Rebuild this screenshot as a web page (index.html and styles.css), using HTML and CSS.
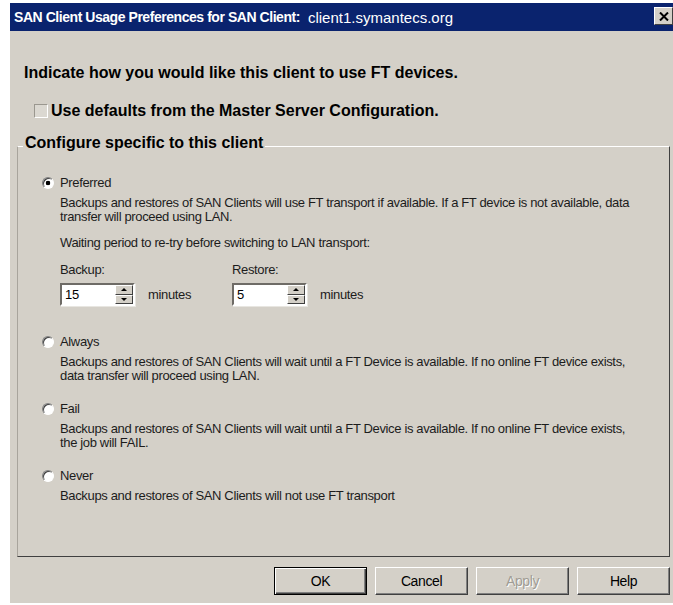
FILE: index.html
```html
<!DOCTYPE html>
<html lang="en">
<head>
<meta charset="utf-8">
<title>SAN Client Usage Preferences</title>
<link rel="stylesheet" href="styles.css">
</head>
<body>
<div class="dialog">
  <div class="titlebar">
    <span class="title-main">SAN Client Usage Preferences for SAN Client:</span><span class="title-host">client1.symantecs.org</span>
    <span class="close-btn">
      <svg width="10" height="9" viewBox="0 0 10 9"><path d="M1 0.5 L9 8.5 M9 0.5 L1 8.5" stroke="#000" stroke-width="2" fill="none"/></svg>
    </span>
  </div>

  <div class="content">
    <p class="intro">Indicate how you would like this client to use FT devices.</p>

    <label class="defaults"><span class="checkbox"></span>Use defaults from the Master Server Configuration.</label>

    <fieldset class="group">
      <legend>Configure specific to this client</legend>
      <div class="group-body">

        <div class="option preferred">
          <div class="radio-row"><span class="radio checked"></span>Preferred</div>
          <p class="desc">Backups and restores of SAN Clients will use FT transport if available. If a FT device is not available, data<br>transfer will proceed using LAN.</p>
          <p class="wait">Waiting period to re-try before switching to LAN transport:</p>
          <div class="spins">
            <div class="spin-field">
              <div class="spin-label">Backup:</div>
              <div class="spin-row">
                <div class="spinbox">
                  <span class="spin-value">15</span>
                  <span class="spin-buttons"><span class="spin-btn"><span class="tri-up"></span></span><span class="spin-btn"><span class="tri-down"></span></span></span>
                </div>
                <span class="unit">minutes</span>
              </div>
            </div>
            <div class="spin-field">
              <div class="spin-label">Restore:</div>
              <div class="spin-row">
                <div class="spinbox">
                  <span class="spin-value">5</span>
                  <span class="spin-buttons"><span class="spin-btn"><span class="tri-up"></span></span><span class="spin-btn"><span class="tri-down"></span></span></span>
                </div>
                <span class="unit">minutes</span>
              </div>
            </div>
          </div>
        </div>

        <div class="option">
          <div class="radio-row"><span class="radio"></span>Always</div>
          <p class="desc">Backups and restores of SAN Clients will wait until a FT Device is available. If no online FT device exists,<br>data transfer will proceed using LAN.</p>
        </div>

        <div class="option">
          <div class="radio-row"><span class="radio"></span>Fail</div>
          <p class="desc">Backups and restores of SAN Clients will wait until a FT Device is available. If no online FT device exists,<br>the job will FAIL.</p>
        </div>

        <div class="option">
          <div class="radio-row"><span class="radio"></span>Never</div>
          <p class="desc">Backups and restores of SAN Clients will not use FT transport</p>
        </div>

      </div>
    </fieldset>

    <div class="buttons">
      <button class="btn default">OK</button>
      <button class="btn">Cancel</button>
      <button class="btn" disabled>Apply</button>
      <button class="btn">Help</button>
    </div>
  </div>
</div>
</body>
</html>
```

FILE: styles.css
```css
* {
  box-sizing: border-box;
}

html,
body {
  margin: 0;
  padding: 0;
  background: #fff;
}

body {
  font-family: "Liberation Sans", Arial, sans-serif;
  font-size: 13px;
  letter-spacing: -0.35px;
  color: #1c1c1c;
  overflow: hidden;
}

p {
  margin: 0;
}

/* window frame */
.dialog {
  margin: 3px 0 0 10px;
  width: 663px;
  height: 600px;
  background: #d4d0c8;
  display: flex;
  flex-direction: column;
}

.titlebar {
  height: 28px;
  background: #0a236e;
  color: #fff;
  display: flex;
  align-items: center;
  padding-left: 4px;
  white-space: nowrap;
  letter-spacing: 0;
}

.title-main {
  font-weight: bold;
  font-size: 14px;
  letter-spacing: -0.45px;
}

.title-host {
  font-size: 15px;
  margin-left: 8px;
}

.close-btn {
  margin-left: auto;
  align-self: flex-start;
  margin-top: 4px;
  width: 19px;
  height: 18px;
  background: #d4d0c8;
  border: 1px solid;
  border-color: #fff #404040 #404040 #fff;
  display: flex;
  align-items: center;
  justify-content: center;
}

/* dialog body */
.content {
  flex: 1;
  display: flex;
  flex-direction: column;
  padding: 0 3px 0 7px;
}

.intro,
.defaults,
.group legend {
  font-weight: bold;
  font-size: 16px;
  line-height: 18px;
  letter-spacing: 0;
  color: #000;
}

.intro {
  margin: 33px 0 0 7px;
}

.defaults {
  margin-top: 20px;
  padding-left: 17px;
  display: flex;
  align-items: center;
}

.checkbox {
  width: 14px;
  height: 14px;
  margin-right: 3px;
  background: #dbd8d1;
  border: 1px solid;
  border-color: #9a978f #fff #fff #9a978f;
}

/* group box */
.group {
  margin: 14px 0 0;
  padding: 0;
  min-width: 0;
  border: 1px solid;
  border-color: #fff #404040 #404040 #a8a49c;
}

.group legend {
  margin-left: 5px;
  padding: 0 2px 6px;
}

.group-body {
  padding: 18px 0 53px 24px;
  line-height: 14px;
  white-space: nowrap;
}

.option {
  margin-top: 19px;
}

.option:first-child {
  margin-top: 0;
}

.option.preferred {
  padding-bottom: 10px;
}

.radio-row {
  display: flex;
  align-items: center;
  height: 14px;
}

.radio {
  width: 12px;
  height: 12px;
  margin-right: 6px;
  border-radius: 50%;
  background: #fff;
  border: 1px solid;
  border-color: #808080 #fff #fff #808080;
  box-shadow: inset 1px 1px 0 #404040;
}

.radio.checked {
  background: radial-gradient(circle at center, #000 0 2px, #fff 2.6px);
}

.desc {
  margin: 6px 0 0 18px;
}

.wait {
  margin: 12px 0 0 18px;
}

/* spinner fields */
.spins {
  margin: 13px 0 0 18px;
  display: grid;
  grid-template-columns: 172px auto;
}

.spin-row {
  margin-top: 6px;
  display: flex;
  align-items: center;
}

.spinbox {
  width: 75px;
  height: 23px;
  display: flex;
  background: #fff;
  border: 2px solid;
  border-color: #6e6b66 #fff #fff #6e6b66;
  box-shadow: 1px 1px 0 #e8e6e1;
}

.spin-value {
  flex: 1;
  padding-left: 3px;
  line-height: 19px;
  color: #000;
}

.spin-buttons {
  width: 18px;
  display: flex;
  flex-direction: column;
}

.spin-btn {
  flex: 1;
  display: flex;
  align-items: center;
  justify-content: center;
  background: #d4d0c8;
  border: 1px solid;
  border-color: #fff #404040 #404040 #fff;
}

.tri-up,
.tri-down {
  width: 0;
  height: 0;
  border-left: 3px solid transparent;
  border-right: 3px solid transparent;
}

.tri-up {
  border-bottom: 3px solid #000;
}

.tri-down {
  border-top: 3px solid #000;
}

.unit {
  margin-left: 13px;
}

/* command buttons */
.buttons {
  margin-top: 10px;
  display: flex;
  justify-content: flex-end;
  gap: 8px;
}

.btn {
  width: 93px;
  height: 28px;
  padding: 0;
  font-family: "Liberation Sans", Arial, sans-serif;
  font-size: 14px;
  letter-spacing: -0.4px;
  color: #000;
  background: #d4d0c8;
  border: 1px solid;
  border-color: #fff #404040 #404040 #fff;
  box-shadow: inset -1px -1px 0 #808080;
}

.btn.default {
  border-color: #000;
  box-shadow: inset 1px 1px 0 #fff, inset -1px -1px 0 #404040, inset -2px -2px 0 #808080;
}

.btn:disabled {
  color: #a09c94;
  text-shadow: 1px 1px 0 #fff;
}
```
